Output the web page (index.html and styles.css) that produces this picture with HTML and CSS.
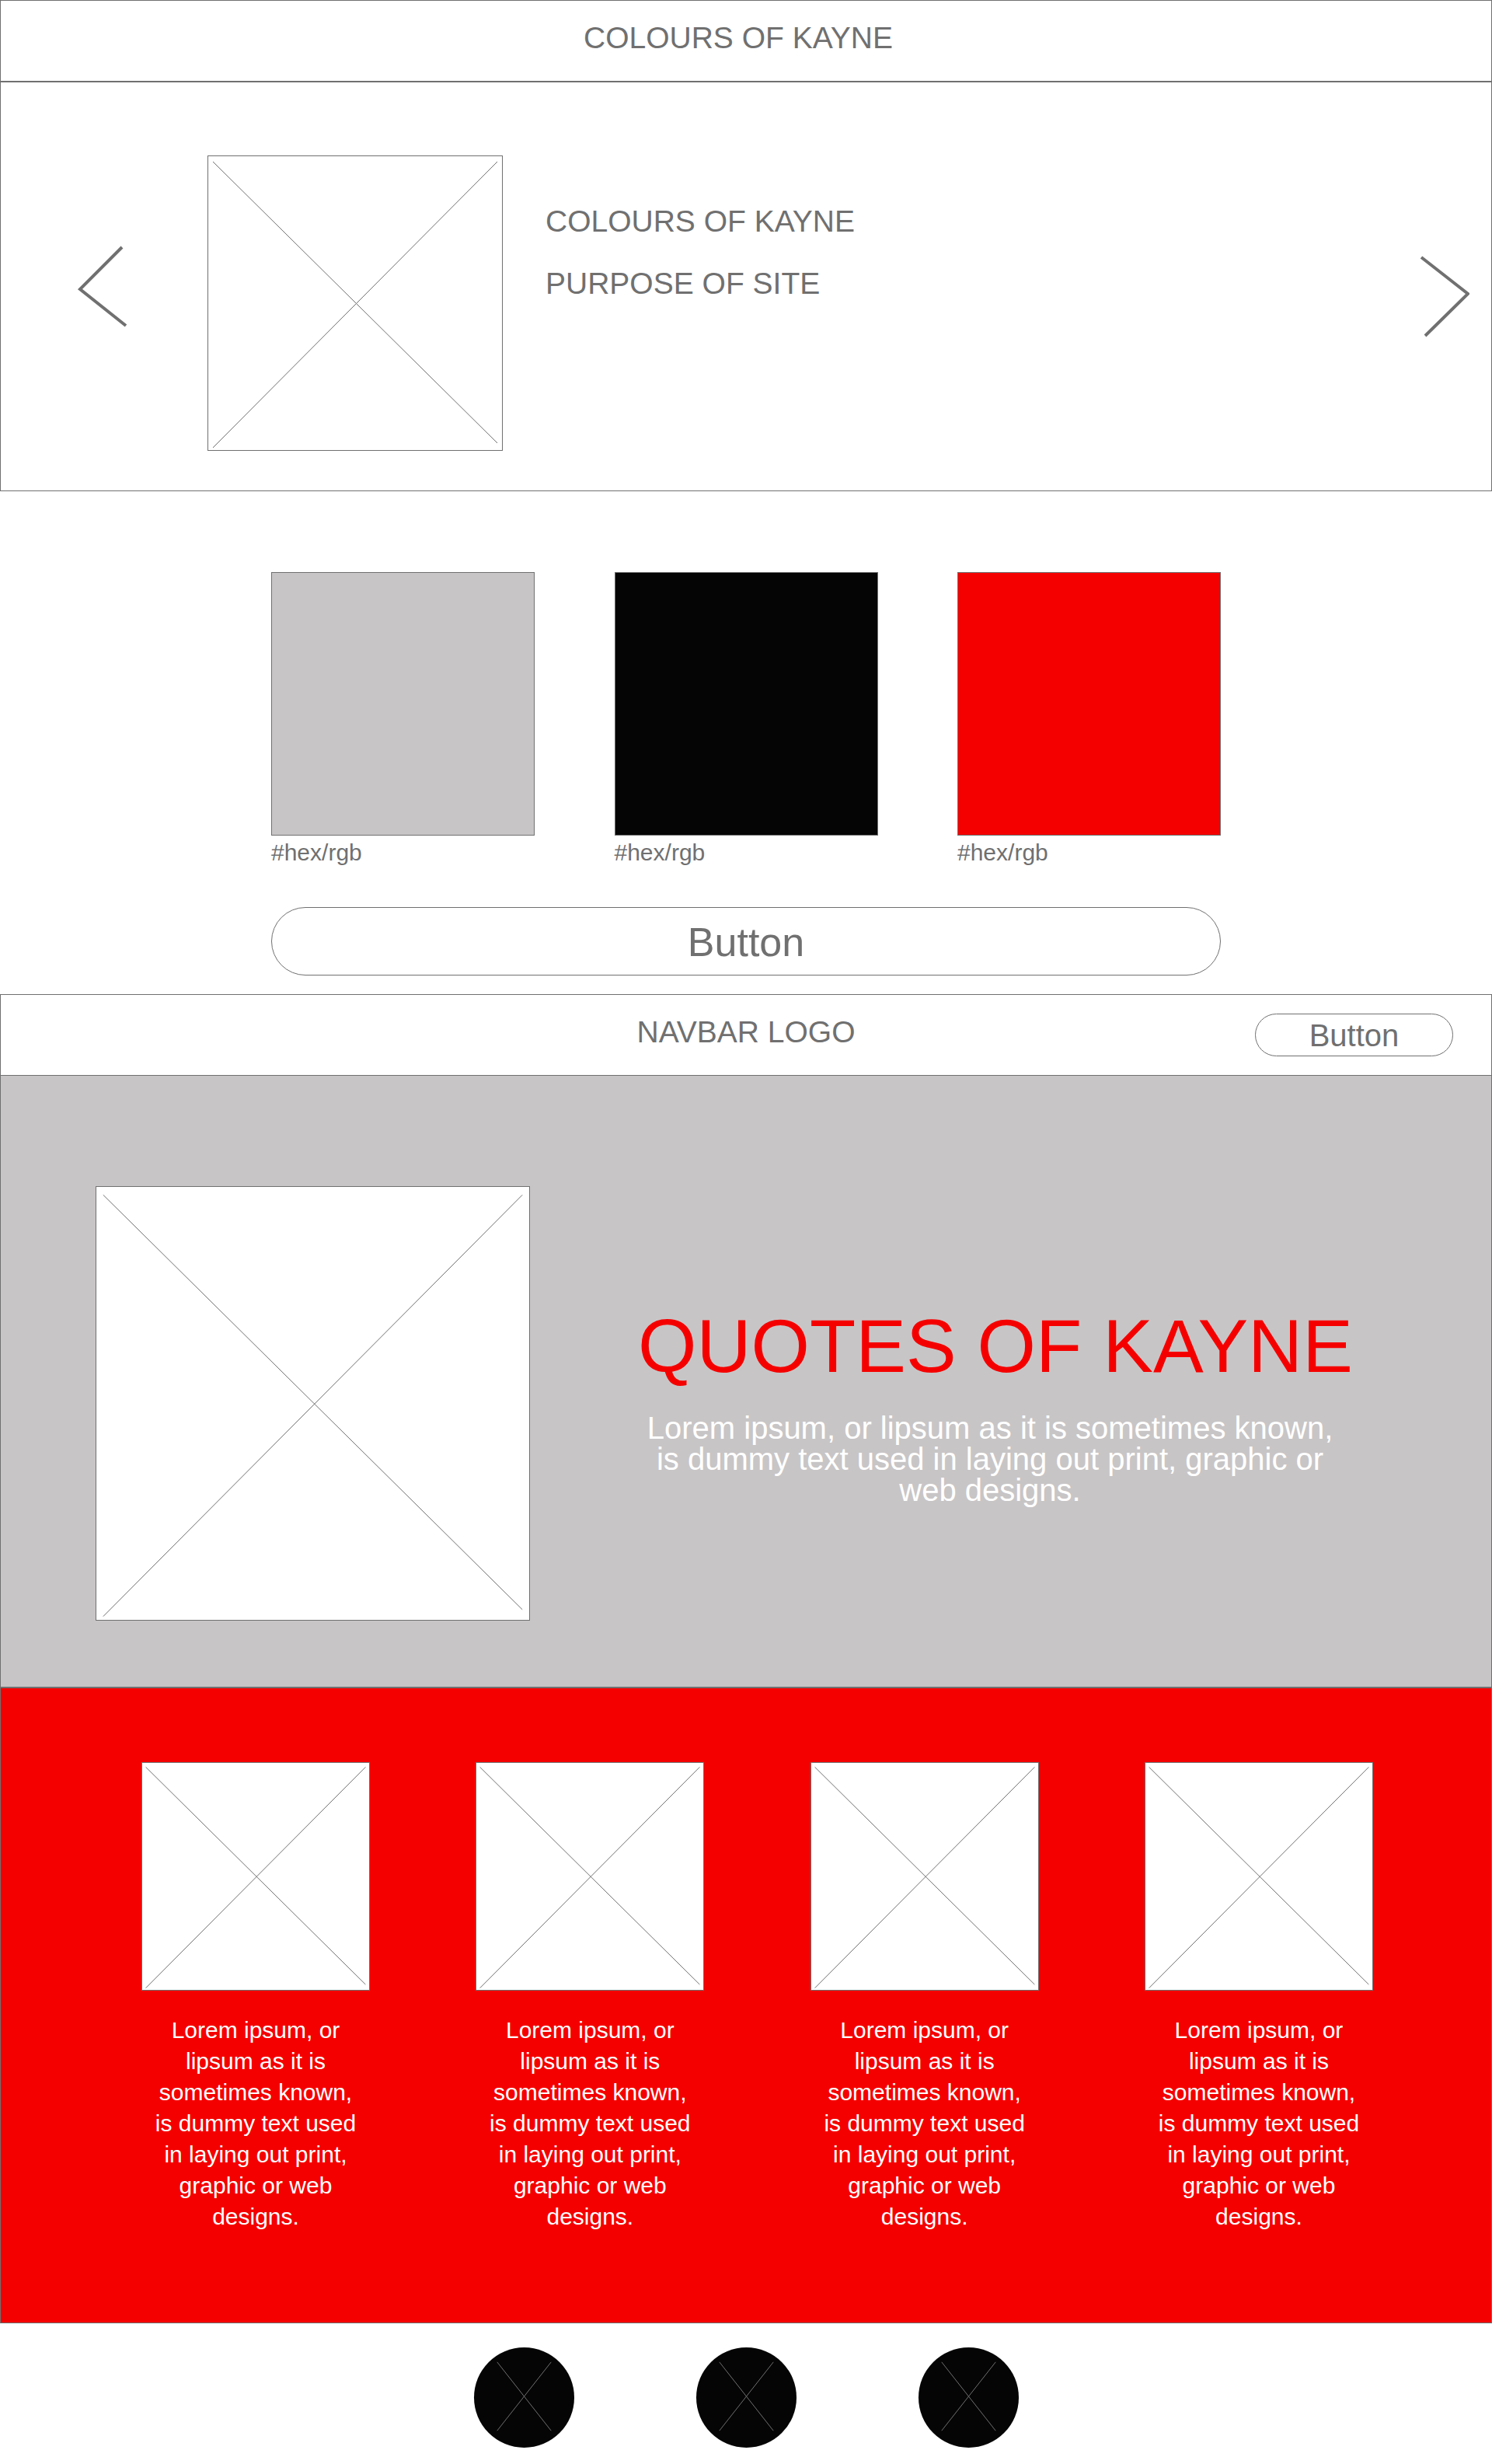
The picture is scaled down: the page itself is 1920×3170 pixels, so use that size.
FILE: index.html
```html
<!DOCTYPE html>
<html lang="en">
<head>
<meta charset="utf-8">
<meta name="viewport" content="width=device-width, initial-scale=1">
<title>Colours of Kayne</title>
<link rel="stylesheet" href="styles.css">
</head>
<body>
<svg class="defs" aria-hidden="true">
  <symbol id="cross" viewBox="1 1 378 378">
    <path d="M7 8 373 370M373 8 7 376" vector-effect="non-scaling-stroke"/>
  </symbol>
  <symbol id="cross-round" viewBox="0 0 130 130">
    <path d="M30 19 100 108M100 19 30 108"/>
  </symbol>
</svg>

<header class="site-header">
  <h1 class="heading">COLOURS OF KAYNE</h1>
</header>

<section class="carousel">
  <button class="arrow" type="button" aria-label="Previous">
    <svg viewBox="0 0 64 380"><path d="M57 118 3 172 62 219"/></svg>
  </button>
  <svg class="placeholder placeholder-medium" role="img" aria-label="Image"><use href="#cross"/></svg>
  <div class="carousel-text">
    <h2 class="heading">COLOURS OF KAYNE</h2>
    <p class="heading">PURPOSE OF SITE</p>
  </div>
  <button class="arrow" type="button" aria-label="Next">
    <svg viewBox="0 0 64 380"><path d="M2 131 62 178 7 232"/></svg>
  </button>
</section>

<section class="palette">
  <div class="swatches">
    <figure class="swatch"><div class="chip chip-grey"></div><figcaption>#hex/rgb</figcaption></figure>
    <figure class="swatch"><div class="chip chip-black"></div><figcaption>#hex/rgb</figcaption></figure>
    <figure class="swatch"><div class="chip chip-red"></div><figcaption>#hex/rgb</figcaption></figure>
  </div>
  <button class="pill pill-large" type="button">Button</button>
</section>

<nav class="navbar">
  <a class="heading navbar-logo" href="#">NAVBAR LOGO</a>
  <button class="pill pill-small" type="button">Button</button>
</nav>

<section class="quotes-hero">
  <svg class="placeholder placeholder-large" role="img" aria-label="Image"><use href="#cross"/></svg>
  <div class="quotes-text">
    <h2 class="quotes-title">QUOTES OF KAYNE</h2>
    <p class="quotes-intro">Lorem ipsum, or lipsum as it is sometimes known, is dummy text used in laying out print, graphic or web designs.</p>
  </div>
</section>

<section class="cards">
  <article class="card">
    <svg class="placeholder placeholder-small" role="img" aria-label="Image"><use href="#cross"/></svg>
    <p>Lorem ipsum, or lipsum as it is sometimes known, is dummy text used in laying out print, graphic or web designs.</p>
  </article>
  <article class="card">
    <svg class="placeholder placeholder-small" role="img" aria-label="Image"><use href="#cross"/></svg>
    <p>Lorem ipsum, or lipsum as it is sometimes known, is dummy text used in laying out print, graphic or web designs.</p>
  </article>
  <article class="card">
    <svg class="placeholder placeholder-small" role="img" aria-label="Image"><use href="#cross"/></svg>
    <p>Lorem ipsum, or lipsum as it is sometimes known, is dummy text used in laying out print, graphic or web designs.</p>
  </article>
  <article class="card">
    <svg class="placeholder placeholder-small" role="img" aria-label="Image"><use href="#cross"/></svg>
    <p>Lorem ipsum, or lipsum as it is sometimes known, is dummy text used in laying out print, graphic or web designs.</p>
  </article>
</section>

<footer class="site-footer">
  <a class="social" href="#" aria-label="Social link 1"><svg><use href="#cross-round"/></svg></a>
  <a class="social" href="#" aria-label="Social link 2"><svg><use href="#cross-round"/></svg></a>
  <a class="social" href="#" aria-label="Social link 3"><svg><use href="#cross-round"/></svg></a>
</footer>
</body>
</html>
```
FILE: styles.css
```css
:root {
  --line: #707070;
  --grey: #c8c5c6;
  --black: #050505;
  --red: #f50000;
}

* {
  box-sizing: border-box;
}

body {
  margin: 0;
  background: #fff;
  color: var(--line);
  font-family: "Liberation Sans", Arial, sans-serif;
}

h1, h2, p, figure {
  margin: 0;
  font-weight: 400;
}

button {
  padding: 0;
  border: 0;
  background: none;
  color: inherit;
  font-family: inherit;
  cursor: pointer;
}

.defs {
  display: none;
}

.heading {
  font-size: 39px;
  line-height: 40px;
}

/* Image placeholders */
.placeholder {
  display: block;
  flex: none;
  border: 1px solid var(--line);
  background: #fff;
  fill: none;
  stroke: var(--line);
}

.placeholder-small {
  width: 294px;
  height: 294px;
}

.placeholder-medium {
  width: 380px;
  height: 380px;
}

.placeholder-large {
  width: 559px;
  height: 559px;
}

/* Header and carousel */
.site-header {
  padding: 28px 20px 35px 0;
  border: 1px solid var(--line);
  border-bottom-width: 2px;
  text-align: center;
}

.carousel {
  display: flex;
  padding: 94px 28px 51px 99px;
  border: 1px solid var(--line);
  border-top: 0;
}

.arrow {
  flex: none;
  width: 64px;
}

.arrow svg {
  display: block;
  width: 100%;
  fill: none;
  stroke: var(--line);
  stroke-width: 4;
}

.carousel .placeholder {
  margin: 0 55px 0 103px;
}

.carousel-text {
  display: flex;
  flex: 1;
  flex-direction: column;
  gap: 40px;
  padding-top: 65px;
}

/* Colour palette */
.palette {
  max-width: 1222px;
  margin: 0 auto;
  padding: 104px 0 24px;
}

.swatches {
  display: flex;
  justify-content: space-between;
  margin-bottom: 50px;
}

.swatch {
  width: 339px;
  font-size: 30px;
  line-height: 40px;
}

.chip {
  aspect-ratio: 1;
  margin-bottom: 2px;
  border: 1px solid var(--line);
}

.chip-grey {
  background: var(--grey);
}

.chip-black {
  background: var(--black);
}

.chip-red {
  background: var(--red);
}

.pill {
  border: 1px solid var(--line);
  border-radius: 44px;
  background: #fff;
}

.pill-large {
  display: block;
  width: 100%;
  height: 88px;
  padding-top: 2px;
  font-size: 52px;
}

.pill-small {
  width: 255px;
  height: 55px;
  font-size: 40px;
  line-height: 40px;
}

/* Navbar */
.navbar {
  display: grid;
  grid-template-columns: 1fr auto 1fr;
  padding: 24px 49px;
  border: 1px solid var(--line);
}

.navbar-logo {
  grid-column: 2;
  padding-top: 4px;
  color: inherit;
  text-decoration: none;
}

.navbar .pill {
  justify-self: end;
}

/* Quotes hero */
.quotes-hero {
  display: flex;
  gap: 139px;
  padding: 142px 122px 85px;
  border: solid var(--line);
  border-width: 0 1px 2px;
  background: var(--grey);
}

.quotes-text {
  flex: 0 1 906px;
  min-width: 0;
  padding-top: 156px;
}

.quotes-title {
  color: var(--red);
  font-size: 97px;
  line-height: 100px;
  white-space: nowrap;
}

.quotes-intro {
  margin-top: 35px;
  color: #fff;
  font-size: 40px;
  line-height: 40px;
  text-align: center;
}

/* Quote cards */
.cards {
  display: flex;
  justify-content: space-between;
  padding: 95px 152px 116px 181px;
  border: 1px solid var(--line);
  border-top: 0;
  background: var(--red);
}

.card {
  width: 294px;
}

.card p {
  padding: 31px 12px 0;
  color: #fff;
  font-size: 30px;
  line-height: 40px;
  text-align: center;
}

/* Footer */
.site-footer {
  display: flex;
  justify-content: center;
  gap: 157px;
  padding: 31px 0 21px;
}

.social {
  width: 129px;
  height: 129px;
  border-radius: 50%;
  background: var(--black);
}

.social svg {
  display: block;
  width: 100%;
  height: 100%;
  fill: none;
  stroke: var(--line);
}
```
